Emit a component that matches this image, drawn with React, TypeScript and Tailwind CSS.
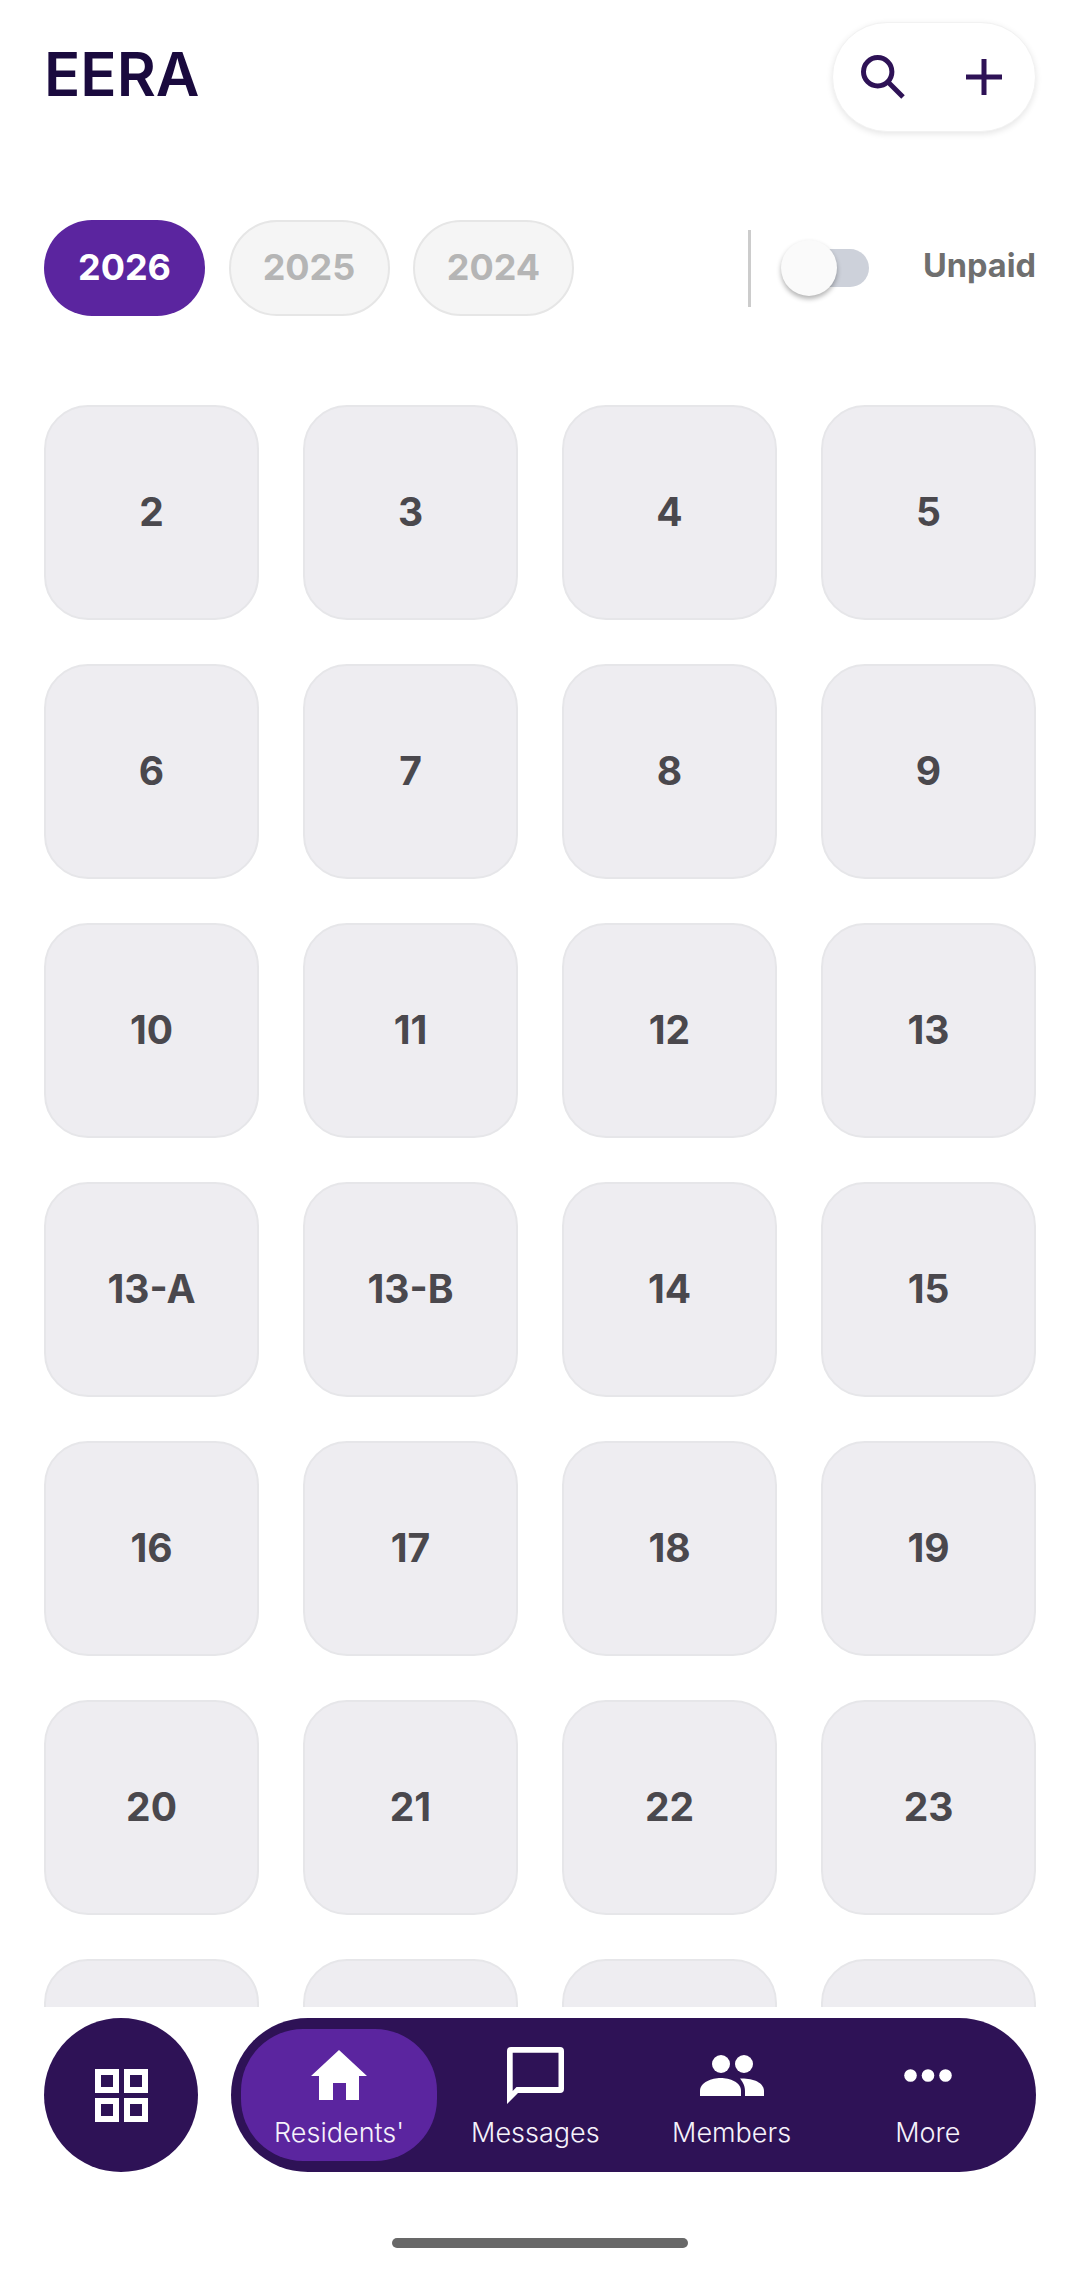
const years = ["2026", "2025", "2024"];

const units = [
  "2", "3", "4", "5",
  "6", "7", "8", "9",
  "10", "11", "12", "13",
  "13-A", "13-B", "14", "15",
  "16", "17", "18", "19",
  "20", "21", "22", "23",
  "", "", "", "",
];

function SearchIcon() {
  return (
    <svg width="44" height="44" viewBox="0 0 44 44" fill="none" stroke="#2e1256" strokeWidth="5">
      <circle cx="16.700" cy="16.700" r="14.200" />
      <path d="M27 27 L42 42" />
    </svg>
  );
}

function PlusIcon() {
  return (
    <svg width="36" height="36" viewBox="0 0 36 36" fill="#2e1256">
      <path d="M15.500 0 H20.500 V15.500 H36 V20.500 H20.500 V36 H15.500 V20.500 H0 V15.500 H15.500 Z" />
    </svg>
  );
}

function GridIcon() {
  return (
    <svg width="53" height="53" viewBox="0 0 53 53" fill="none" stroke="#fff" strokeWidth="6">
      <rect x="3" y="3" width="18" height="18" />
      <rect x="32" y="3" width="18" height="18" />
      <rect x="3" y="32" width="18" height="18" />
      <rect x="32" y="32" width="18" height="18" />
    </svg>
  );
}

function HomeIcon() {
  return (
    <svg width="56" height="50" viewBox="0 0 56 50" fill="#fff">
      <path d="M28 0 L56 26 H48 V50 H35 V33 H22 V50 H8 V26 H0 Z" />
    </svg>
  );
}

function ChatIcon() {
  return (
    <svg width="57" height="57" viewBox="0 0 57 57" fill="#fff" fillRule="evenodd">
      <path d="M4 0 H53 A4 4 0 0 1 57 4 V42 A4 4 0 0 1 53 46 H11 L0 57 V4 A4 4 0 0 1 4 0 Z M5.700 5.700 V44 L9.500 40 H51.500 V5.700 Z" />
    </svg>
  );
}

function PeopleIcon() {
  return (
    <svg width="64" height="41" viewBox="0 0 64 41" fill="#fff">
      <circle cx="21" cy="9" r="9" />
      <circle cx="44" cy="9" r="9" />
      <path d="M0 41 V36 C0 27 12 23 20.500 23 C30 23 41 27 41 36 V41 Z" />
      <path d="M45 41 V36 C45 30 42 26 40 23.500 C52 23 64 27 64 36 V41 Z" />
    </svg>
  );
}

function DotsIcon() {
  return (
    <svg width="48" height="13" viewBox="0 0 48 13" fill="#fff">
      <circle cx="6.500" cy="6.500" r="6.300" />
      <circle cx="24" cy="6.500" r="6.300" />
      <circle cx="41.500" cy="6.500" r="6.300" />
    </svg>
  );
}

function NavItem({ label, icon, active }: { label: string; icon: React.ReactNode; active?: boolean }) {
  return (
    <div
      className={`flex h-[132px] flex-1 flex-col items-center rounded-[62px] ${
        active ? "bg-[#5b259f]" : ""
      }`}
    >
      <div className="flex h-[92px] items-center justify-center">{icon}</div>
      <span className="-mt-[5px] text-[27px] leading-[34px] font-light text-[#f6f2fb]">{label}</span>
    </div>
  );
}

export default function App() {
  return (
    <div className="relative flex h-[2276px] w-[1080px] flex-col overflow-hidden bg-white font-['Inter',sans-serif]">
      <header className="flex h-[132px] items-start justify-between px-11 pt-[22px]">
        <h1 className="mt-[18px] text-[60px] leading-[68px] font-semibold text-[#1a0a3e]">EERA</h1>
        <div className="flex h-[110px] w-[204px] items-center justify-between rounded-[55px] border border-[#f2f2f2] bg-white pl-[28px] pr-[33px] shadow-[0_2px_6px_rgba(0,0,0,0.1)]">
          <SearchIcon />
          <PlusIcon />
        </div>
      </header>

      <section className="mt-[88px] flex h-[96px] items-center px-11">
        <div className="flex gap-[23.5px]">
          {years.map((year, i) => (
            <div
              key={year}
              className={`flex h-[96px] w-[161px] items-center justify-center rounded-[48px] pb-[3px] text-[36px] font-bold ${
                i === 0
                  ? "bg-[#5b259f] text-white"
                  : "border-2 border-[#e6e6e6] bg-[#f5f5f5] text-[#b5b5b5]"
              }`}
            >
              {year}
            </div>
          ))}
        </div>
        <div className="ml-auto flex items-center">
          <div className="h-[77px] w-[3px] bg-[#cccccc]" />
          <div className="relative ml-[33px] h-[38px] w-[85px] rounded-full bg-[#cdd1da]">
            <div className="absolute -top-[9px] -left-[3px] h-[56px] w-[56px] rounded-full bg-[#fafafa] shadow-[0_3px_5px_rgba(0,0,0,0.3)]" />
          </div>
          <span className="ml-[54px] pb-[3px] text-[32.5px] font-bold text-[#6f6f6f]">Unpaid</span>
        </div>
      </section>

      <main className="mt-[89px] h-[1602px] overflow-hidden px-11">
        <div className="grid grid-cols-4 gap-x-11 gap-y-[44px]">
          {units.map((unit, i) => (
            <div
              key={i}
              className="flex h-[215px] items-center justify-center rounded-[44px] border-2 border-[#e6e6e9] bg-[#eeedf1] text-[39px] font-bold text-[#4a484d]"
            >
              {unit}
            </div>
          ))}
        </div>
      </main>

      <nav className="absolute top-[2018px] left-11 flex h-[154px] w-[992px] items-center gap-[33px]">
        <div className="flex h-[154px] w-[154px] shrink-0 items-center justify-center rounded-full bg-[#2e1256]">
          <GridIcon />
        </div>
        <div className="flex h-[154px] flex-1 items-center rounded-[77px] bg-[#2e1256] px-[10px]">
          <NavItem label="Residents'" icon={<HomeIcon />} active />
          <NavItem label="Messages" icon={<ChatIcon />} />
          <NavItem label="Members" icon={<PeopleIcon />} />
          <NavItem label="More" icon={<DotsIcon />} />
        </div>
      </nav>

      <div className="absolute top-[2238px] left-[392px] h-[10px] w-[296px] rounded-full bg-[#686868]" />
    </div>
  );
}
